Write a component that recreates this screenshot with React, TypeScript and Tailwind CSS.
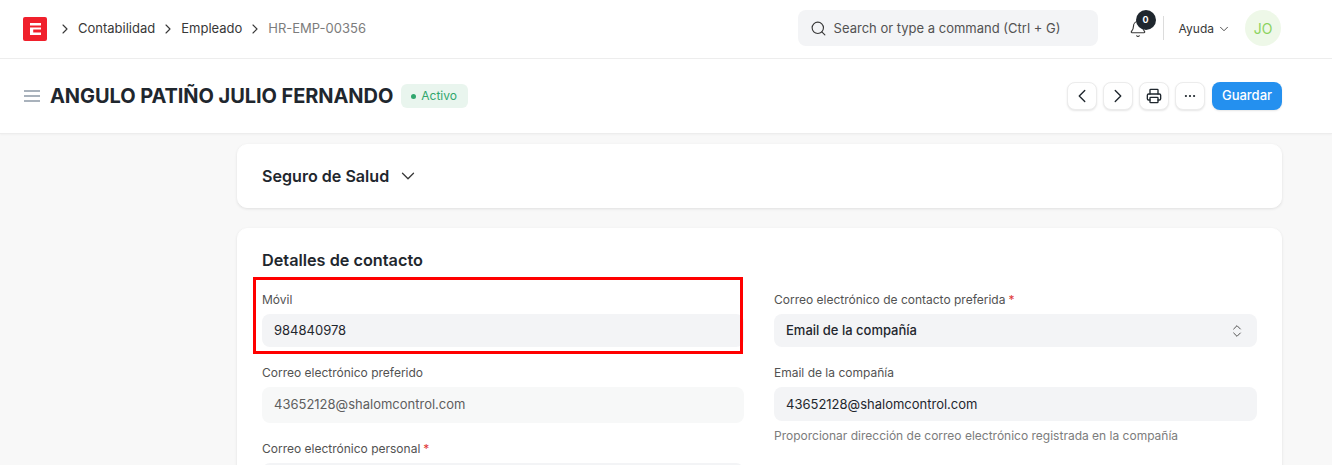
import { ChevronRight, ChevronLeft, ChevronDown, ChevronsUpDown, Search, Bell, Printer, Ellipsis } from 'lucide-react';

function Label({ text, required }: { text: string; required?: boolean }) {
  return (
    <p className="text-[12px] leading-[16px] text-[#525252] mb-[6px]">
      {text}
      {required && <span className="text-[#e03636] ml-[3px]">*</span>}
    </p>
  );
}

function IconButton({ children }: { children: React.ReactNode }) {
  return (
    <button className="w-[30px] h-[28px] flex items-center justify-center rounded-lg bg-white border border-[#ececec] shadow-[0_1px_2px_rgba(0,0,0,0.1)] text-[#1f272e]">
      {children}
    </button>
  );
}

export default function App() {
  return (
    <div className="w-[1332px] h-[465px] overflow-hidden bg-[#f8f8f8] text-[#1f272e] font-['Inter',sans-serif] relative">
      {/* Navbar */}
      <header className="h-[59px] bg-white border-b border-[#ededed] flex items-center pl-[23px] pr-[51px]">
        <div className="w-6 h-6 rounded-[2px] bg-[#f0202c] flex items-center justify-center">
          <svg width="11" height="12" viewBox="0 0 11 12">
            <path d="M0 0h11v2.5H0zM0 4.5h11v2H3.2v3H11V12H0z" fill="#fff" />
          </svg>
        </div>
        <nav className="flex items-center text-[13px] text-[#383838] ml-[10px]">
          <ChevronRight size={16} strokeWidth={1.7} />
          <span className="ml-[5px]">Contabilidad</span>
          <ChevronRight size={16} strokeWidth={1.7} className="ml-[5px]" />
          <span className="ml-[5px]">Empleado</span>
          <ChevronRight size={16} strokeWidth={1.7} className="ml-[5px]" />
          <span className="ml-[5px] text-[#7c7c7c]">HR-EMP-00356</span>
        </nav>
        <div className="ml-auto mb-[2px] w-[300px] h-9 rounded-lg bg-[#f3f4f6] flex items-center pl-[12px] text-[13px] text-[#525252]">
          <Search size={17} strokeWidth={1.6} className="text-[#383838]" />
          <span className="ml-[7px] mt-[2px]">Search or type a command (Ctrl + G)</span>
        </div>
        <div className="relative ml-[31px] w-[18px] h-[18px]">
          <Bell size={18} strokeWidth={1.5} className="text-[#383838]" />
          <span className="absolute -top-[10px] left-[7px] w-5 h-5 rounded-full bg-[#1f272e] text-white text-[9px] font-bold flex items-center justify-center">0</span>
        </div>
        <div className="w-px h-6 bg-[#dcdcdc] ml-[16px] mb-[2px]" />
        <span className="ml-[15px] text-[12px] text-[#383838]">Ayuda</span>
        <ChevronDown size={14} strokeWidth={1.5} className="ml-[3px] text-[#383838]" />
        <div className="ml-[14px] mb-[2px] w-9 h-9 rounded-full bg-[#eef8e8] text-[#8cd35f] text-[14px] flex items-center justify-center">JO</div>
      </header>

      {/* Page head */}
      <div className="h-[75px] bg-white border-b border-[#ededed] shadow-[0_1px_2px_rgba(0,0,0,0.03)] flex items-center pl-[24px] pr-[50px]">
        <svg width="16" height="14" viewBox="0 0 16 14" className="text-[#8d99a6]">
          <path d="M0 2h16M0 7h16M0 12h16" stroke="currentColor" strokeWidth="1.5" />
        </svg>
        <h1 className="ml-[10px] text-[20px] leading-none font-bold tracking-[-0.07px]">ANGULO PATIÑO JULIO FERNANDO</h1>
        <span className="ml-2 h-6 pl-[10px] pr-[11px] rounded-md bg-[#e9f5ee] text-[#30a66d] text-[12px] flex items-center">
          <span className="w-[5px] h-[5px] rounded-full bg-[#30a66d] mr-[5px]" />
          Activo
        </span>
        <div className="ml-auto flex items-center">
          <div className="flex gap-[6px] mr-[7px]">
            <IconButton><ChevronLeft size={22} strokeWidth={1.5} /></IconButton>
            <IconButton><ChevronRight size={22} strokeWidth={1.5} /></IconButton>
            <IconButton><Printer size={16} strokeWidth={2} /></IconButton>
            <IconButton><Ellipsis size={14} strokeWidth={1.8} /></IconButton>
          </div>
          <button className="w-[70px] h-7 rounded-lg bg-[#2490ef] text-white text-[13px] font-medium shadow-[0_1px_2px_rgba(0,0,0,0.1)]">Guardar</button>
        </div>
      </div>

      {/* Form */}
      <main className="ml-[237px] w-[1045px] pt-[10px]">
        <section className="h-[64px] bg-white rounded-[10px] border border-white shadow-[0_1px_3px_rgba(0,0,0,0.1)] flex items-center pl-6">
          <h2 className="text-[16.1px] font-semibold">Seguro de Salud</h2>
          <ChevronDown size={22} strokeWidth={1.4} className="ml-[8px] text-[#383838]" />
        </section>

        <section className="mt-5 bg-white rounded-[10px] border border-white shadow-[0_1px_3px_rgba(0,0,0,0.1)] pt-[21px] px-6 h-[300px]">
          <h2 className="text-[16.25px] leading-[20px] font-semibold">Detalles de contacto</h2>
          <div className="grid grid-cols-[482px_483px] gap-x-[30px] mt-[22px]">
            <div>
              <Label text="Móvil" />
              <div className="h-[33px] rounded-lg bg-[#f3f4f6] flex items-center px-3 text-[13px]">984840978</div>
              <div className="mt-[18px]">
                <Label text="Correo electrónico preferido" />
                <div className="h-9 rounded-lg bg-[#f7f8f8] flex items-center px-3 text-[13px] text-[#5e5e5e]">43652128@shalomcontrol.com</div>
              </div>
              <div className="mt-[18px]">
                <Label text="Correo electrónico personal" required />
                <div className="h-9 rounded-lg bg-[#f3f4f6]" />
              </div>
            </div>
            <div>
              <Label text="Correo electrónico de contacto preferida" required />
              <div className="h-[33px] rounded-lg bg-[#f3f4f6] flex items-center justify-between pl-3 pr-3 text-[13px] font-medium">
                Email de la compañía
                <ChevronsUpDown size={16} strokeWidth={1.5} className="text-[#525252]" />
              </div>
              <div className="mt-[18px]">
                <Label text="Email de la compañía" />
                <div className="h-[34px] rounded-lg bg-[#f3f4f6] flex items-center px-3 pt-[2px] text-[13px]">43652128@shalomcontrol.com</div>
                <p className="mt-[7px] text-[12px] leading-[16px] text-[#7c7c7c]">Proporcionar dirección de correo electrónico registrada en la compañía</p>
              </div>
            </div>
          </div>
        </section>
      </main>

      {/* Red annotation */}
      <div className="absolute left-[253px] top-[277px] w-[490px] h-[77px] border-[3px] border-[#ff0000] pointer-events-none" />
    </div>
  );
}
